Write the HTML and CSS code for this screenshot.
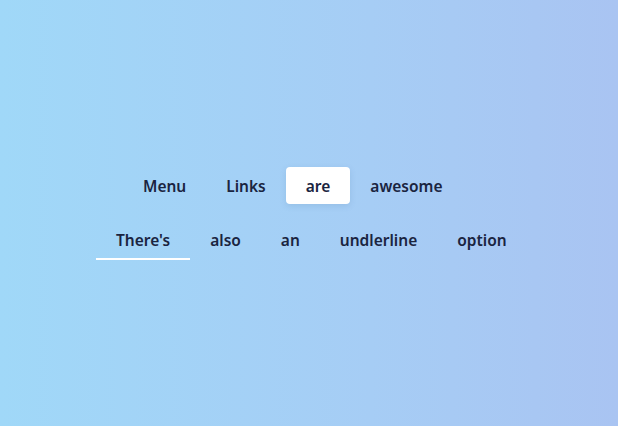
FILE: index.html
```html
<!DOCTYPE html>
<html>
<head>
<meta charset="utf-8">
<link rel="stylesheet" href="styles.css">
</head>
<body>
<main class="stage">
  <nav class="menu menu-pill">
    <a class="item">Menu</a>
    <a class="item">Links</a>
    <a class="item active">are</a>
    <a class="item">awesome</a>
  </nav>
  <nav class="menu menu-line">
    <a class="item active">There's</a>
    <a class="item">also</a>
    <a class="item">an</a>
    <a class="item">undlerline</a>
    <a class="item">option</a>
  </nav>
</main>
</body>
</html>
```
FILE: styles.css
```css
html, body {
  margin: 0;
  padding: 0;
  height: 100%;
}
body {
  background: linear-gradient(to right, #a0d8f8 0%, #a6cdf5 60%, #a9c4f2 100%);
  font-family: "Noto Sans", "DejaVu Sans", sans-serif;
}
.stage {
  height: 100%;
  display: flex;
  flex-direction: column;
  justify-content: center;
  gap: 17px;
}
.menu {
  display: flex;
}
.menu-pill {
  padding-left: 123px;
}
.menu-line {
  padding-left: 96px;
}
.item {
  display: block;
  box-sizing: border-box;
  height: 37px;
  line-height: 35px;
  padding: 2px 20px 0;
  font-size: 15.5px;
  font-weight: 600;
  color: #1a2440;
  border-radius: 4px;
}
.menu-pill .item.active {
  background: #ffffff;
  box-shadow: 0 2px 6px rgba(60, 100, 150, 0.15);
}
.menu-line .item {
  border-radius: 0;
}
.menu-line .item.active {
  border-bottom: 2px solid #ffffff;
  height: 39px;
}
```
